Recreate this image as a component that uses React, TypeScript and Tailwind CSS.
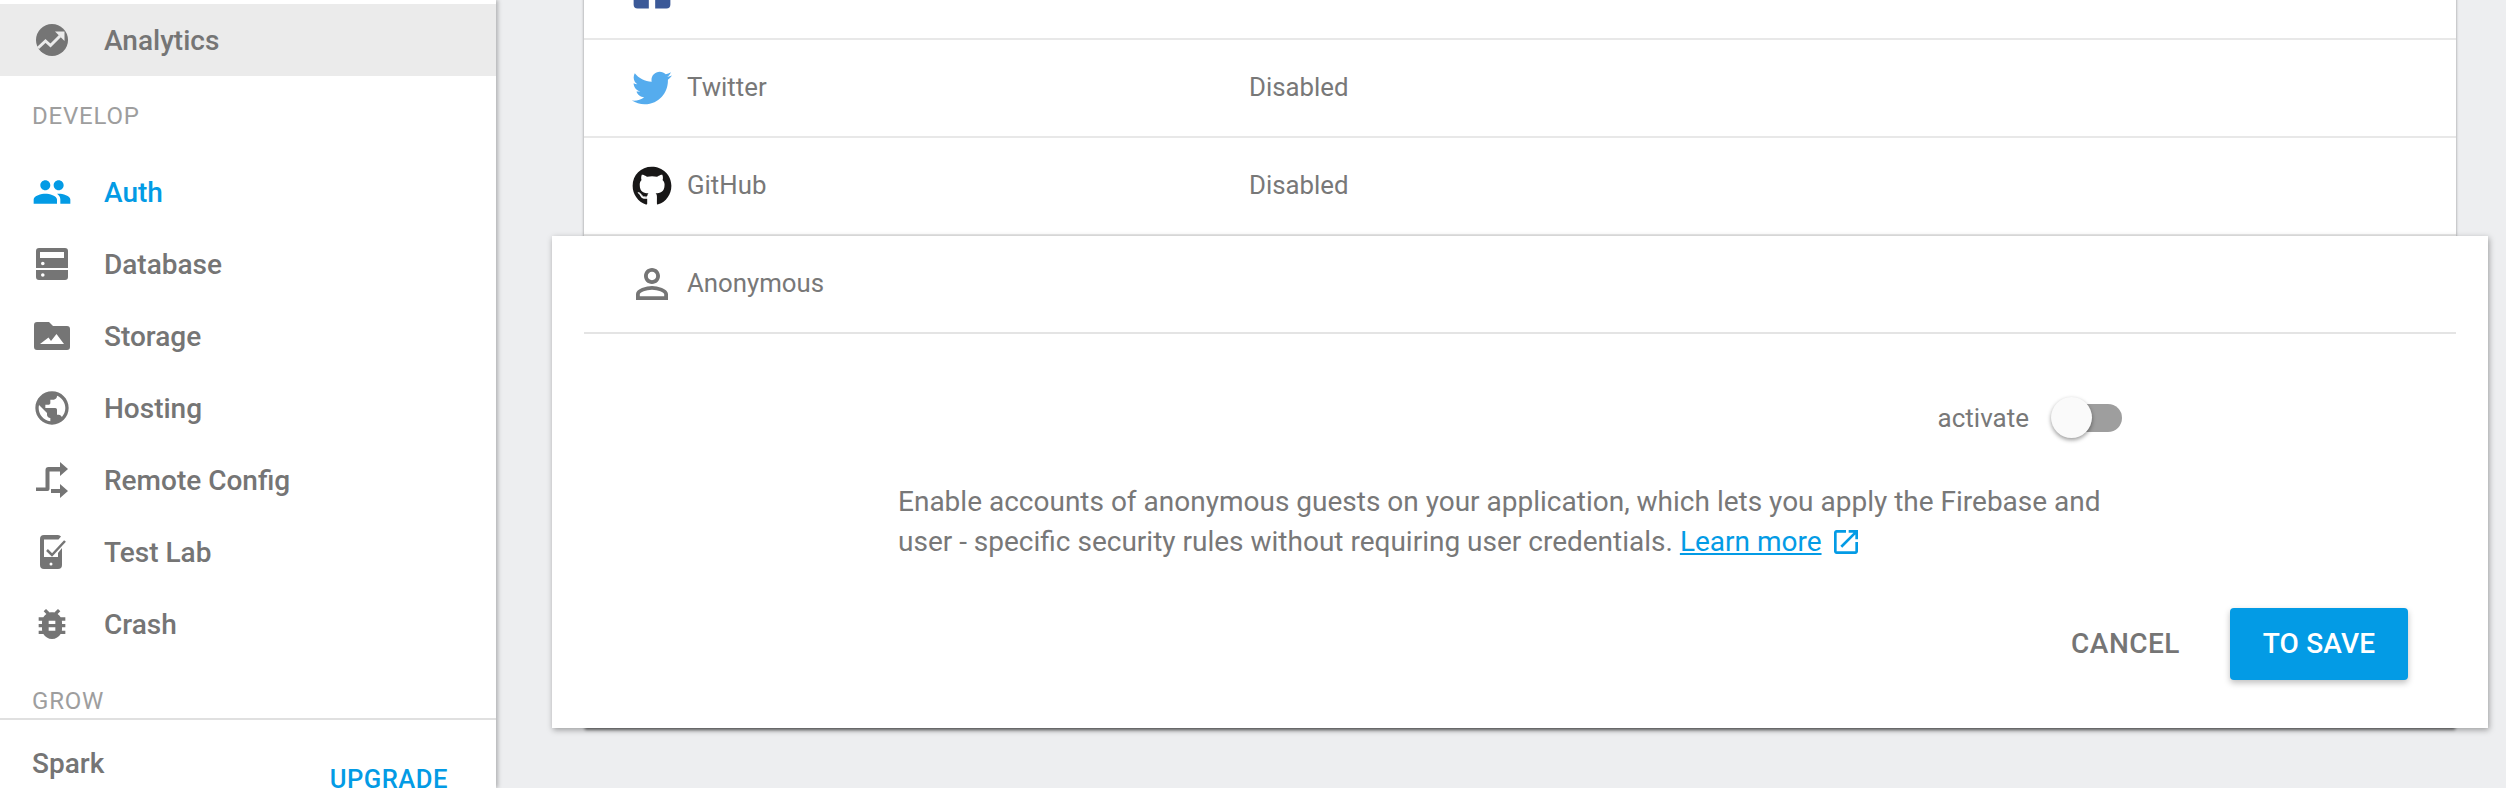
import { FaFacebookSquare, FaGithub, FaTwitter } from 'react-icons/fa';

const font = "font-['Roboto','Liberation_Sans',sans-serif]";

function AnalyticsIcon() {
  return (
    <svg viewBox="0 0 32 32" className="w-[32px] h-[32px]">
      <circle cx="16" cy="16" r="16" fill="#757575" />
      <path d="M2 24l7.500-7 5 4.500L24 12" fill="none" stroke="#ebebeb" strokeWidth="3" />
      <path d="M19 7.500h9.500V17z" fill="#ebebeb" />
    </svg>
  );
}

function AuthIcon() {
  return (
    <svg viewBox="0 0 24 24" className="w-[40px] h-[40px] fill-[#039be5]">
      <path d="M16 11c1.660 0 2.990-1.340 2.990-3S17.660 5 16 5c-1.660 0-3 1.340-3 3s1.340 3 3 3zm-8 0c1.660 0 2.990-1.340 2.990-3S9.660 5 8 5C6.340 5 5 6.340 5 8s1.340 3 3 3zm0 2c-2.330 0-7 1.170-7 3.500V19h14v-2.500c0-2.330-4.670-3.500-7-3.500zm8 0c-.29 0-.62.02-.97.05 1.160.84 1.970 1.970 1.970 3.450V19h6v-2.500c0-2.330-4.670-3.500-7-3.500z" />
    </svg>
  );
}

function DatabaseIcon() {
  return (
    <svg viewBox="0 0 32 32" className="w-[32px] h-[32px]">
      <path
        fillRule="evenodd"
        fill="#757575"
        d="M3 0h26a3 3 0 0 1 3 3v17H0V3a3 3 0 0 1 3-3zm1 4v6h24V4zm1 11.500a1.800 1.800 0 1 0 3.600 0 1.800 1.800 0 1 0-3.600 0zM0 22h32v7a3 3 0 0 1-3 3H3a3 3 0 0 1-3-3zm5 5a1.800 1.800 0 1 0 3.600 0 1.800 1.800 0 1 0-3.600 0z"
      />
    </svg>
  );
}

function StorageIcon() {
  return (
    <svg viewBox="0 0 36 28" className="w-[36px] h-[28px]">
      <path
        fillRule="evenodd"
        fill="#757575"
        d="M3 0h12l4 4h14a3 3 0 0 1 3 3v18a3 3 0 0 1-3 3H3a3 3 0 0 1-3-3V3a3 3 0 0 1 3-3zm3 22h24l-7.500-10-5.500 7-2.500-3.500z"
      />
    </svg>
  );
}

function HostingIcon() {
  return (
    <svg viewBox="0 0 24 24" className="w-[40px] h-[40px] fill-[#757575]">
      <path d="M12 2C6.480 2 2 6.480 2 12s4.480 10 10 10 10-4.480 10-10S17.520 2 12 2zm-1 17.930c-3.950-.49-7-3.850-7-7.930 0-.62.08-1.210.21-1.790L9 15v1c0 1.100.9 2 2 2v1.930zm6.900-2.540c-.26-.81-1-1.390-1.900-1.390h-1v-3c0-.55-.45-1-1-1H8v-2h2c.55 0 1-.45 1-1V7h2c1.100 0 2-.9 2-2v-.41c2.930 1.190 5 4.060 5 7.410 0 2.080-.8 3.970-2.100 5.390z" />
    </svg>
  );
}

function RemoteIcon() {
  return (
    <svg viewBox="0 0 32 36" className="w-[32px] h-[36px] fill-[#757575]">
      <path d="M24 0l8 7-8 7V9.500H13.500V27a2 2 0 0 1-2 2H0v-3.500h9.500V8a3 3 0 0 1 3-3H24z" />
      <path d="M24 22l8 7-8 7v-5H15v-4h9z" />
    </svg>
  );
}

function TestLabIcon() {
  return (
    <svg viewBox="0 0 28 34" className="w-[28px] h-[34px]">
      <path
        fillRule="evenodd"
        fill="#757575"
        d="M7 0h13a4 4 0 0 1 3 1.500L20.500 4.500H6V22h14v-4l4-5v17a4 4 0 0 1-4 4H6a4 4 0 0 1-4-4V4a4 4 0 0 1 4-4zm6 27.500a1.500 1.500 0 1 0 0 3 1.500 1.500 0 1 0 0-3z"
      />
      <path d="M9 15l5 5L27 6" fill="none" stroke="#757575" strokeWidth="2.500" />
    </svg>
  );
}

function CrashIcon() {
  return (
    <svg viewBox="0 0 24 24" className="w-[40px] h-[40px] fill-[#757575]">
      <path d="M20 8h-2.810c-.45-.78-1.070-1.450-1.820-1.960L17 4.410 15.590 3l-2.170 2.170C12.960 5.060 12.490 5 12 5c-.49 0-.96.060-1.410.17L8.410 3 7 4.410l1.620 1.630C7.880 6.550 7.260 7.220 6.810 8H4v2h2.090c-.05.33-.09.66-.09 1v1H4v2h2v1c0 .34.04.67.09 1H4v2h2.810c1.040 1.790 2.970 3 5.190 3s4.150-1.210 5.190-3H20v-2h-2.090c.05-.33.09-.66.09-1v-1h2v-2h-2v-1c0-.34-.04-.67-.09-1H20V8zm-6 8h-4v-2h4v2zm0-4h-4v-2h4v2z" />
    </svg>
  );
}

function PersonIcon() {
  return (
    <svg viewBox="0 0 24 24" className="w-[48px] h-[48px] fill-[#757575]">
      <path d="M12 5.900c1.160 0 2.100.94 2.100 2.100s-.94 2.100-2.100 2.100S9.900 9.160 9.900 8s.94-2.100 2.100-2.100m0 9c2.970 0 6.100 1.460 6.100 2.100v1.100H5.900V17c0-.64 3.130-2.100 6.100-2.100M12 4C9.790 4 8 5.790 8 8s1.790 4 4 4 4-1.790 4-4-1.790-4-4-4zm0 9c-2.670 0-8 1.340-8 4v3h16v-3c0-2.660-5.330-4-8-4z" />
    </svg>
  );
}

function OpenIcon() {
  return (
    <svg viewBox="0 0 24 24" className="inline-block align-[-7px] ml-[8px] w-[32px] h-[32px] fill-[#039be5]">
      <path d="M19 19H5V5h7V3H5c-1.110 0-2 .9-2 2v14c0 1.100.89 2 2 2h14c1.100 0 2-.9 2-2v-7h-2v7zM14 3v2h3.590l-9.830 9.830 1.410 1.410L19 6.410V10h2V3h-7z" />
    </svg>
  );
}

function NavItem({ icon, label, active }: { icon: React.ReactNode; label: string; active?: boolean }) {
  return (
    <div className={`flex items-center h-[72px] shrink-0 ${active ? 'text-[#039be5]' : 'text-[#757575]'}`}>
      <div className="w-[104px] flex justify-center shrink-0">{icon}</div>
      <span className="text-[28px] font-medium pt-[2px]">{label}</span>
    </div>
  );
}

function ProviderRow({ icon, name, status }: { icon: React.ReactNode; name: string; status?: string }) {
  return (
    <div className="flex items-center h-[98px] border-b-2 border-[#e8e8e8] pl-[44px] text-[25.800px] text-[#787878]">
      <div className="w-[48px] flex justify-center shrink-0">{icon}</div>
      <span className="ml-[11px] w-[562px] pb-[1px]">{name}</span>
      {status && <span className="pb-[1px]">{status}</span>}
    </div>
  );
}

export default function App() {
  return (
    <div className={`flex h-[788px] overflow-hidden bg-[#edeef0] ${font}`}>
      {/* Sidebar */}
      <aside className="w-[496px] shrink-0 bg-white pt-[4px] flex flex-col shadow-[2px_0_4px_rgba(0,0,0,0.25)] z-10">
        <div className="flex items-center h-[72px] shrink-0 bg-[#ebebeb] text-[#757575]">
          <div className="w-[104px] flex justify-center shrink-0">
            <AnalyticsIcon />
          </div>
          <span className="text-[28px] font-medium pt-[2px]">Analytics</span>
        </div>

        <div className="h-[80px] shrink-0 flex items-center pl-[32px] text-[24px] tracking-[0.8px] text-[#9e9e9e]">DEVELOP</div>

        <NavItem active icon={<AuthIcon />} label="Auth" />
        <NavItem icon={<DatabaseIcon />} label="Database" />
        <NavItem icon={<StorageIcon />} label="Storage" />
        <NavItem icon={<HostingIcon />} label="Hosting" />
        <NavItem icon={<RemoteIcon />} label="Remote Config" />
        <NavItem icon={<TestLabIcon />} label="Test Lab" />
        <NavItem icon={<CrashIcon />} label="Crash" />

        <div className="h-[58px] shrink-0 flex items-end pl-[32px] leading-[34px] text-[24px] tracking-[0.8px] text-[#9e9e9e]">GROW</div>

        <div className="border-t-2 border-[#e0e0e0] flex justify-between pl-[32px] pr-[48px] pt-[23px]">
          <span className="text-[#757575] text-[28px] font-medium">Spark</span>
          <span className="text-[#039be5] text-[25.600px] font-medium mt-[17px] tracking-[0.5px]">UPGRADE</span>
        </div>
      </aside>

      {/* Providers card */}
      <main className="flex-1 pl-[88px] pr-[50px]">
        <div className="-mt-[58px] bg-white h-[786px] shadow-[0_3px_3px_-1px_rgba(0,0,0,0.45),0_0_3px_rgba(0,0,0,0.2)]">
          <ProviderRow icon={<FaFacebookSquare className="w-[42px] h-[42px] text-[#3b5998]" />} name="Facebook" status="Disabled" />
          <ProviderRow icon={<FaTwitter className="w-[40px] h-[40px] text-[#55acee]" />} name="Twitter" status="Disabled" />
          <ProviderRow icon={<FaGithub className="w-[40px] h-[40px] text-[#181717]" />} name="GitHub" status="Disabled" />

          {/* Expanded provider */}
          <div className="relative -mx-[32px] bg-white shadow-[1px_2px_6px_rgba(0,0,0,0.35)] pb-[48px] text-[#787878]">
            <div className="mx-[32px] flex items-center h-[98px] border-b-2 border-[#e4e4e4] pl-[44px] text-[25.800px]">
              <div className="w-[48px] flex justify-center shrink-0">
                <PersonIcon />
              </div>
              <span className="ml-[11px] pb-[1px]">Anonymous</span>
            </div>

            <div className="mt-[70px] pr-[366px] flex justify-end items-center h-[28px]">
              <span className="text-[26px] mr-[23px]">activate</span>
              <div className="relative w-[70px] h-[28px] rounded-full bg-[#9e9e9e]">
                <div className="absolute -left-[1px] -top-[7px] w-[41px] h-[41px] rounded-full bg-[#fafafa] shadow-[0_2px_4px_rgba(0,0,0,0.4)]" />
              </div>
            </div>

            <p className="mt-[50px] ml-[346px] w-[1240px] text-[28px] leading-[40px]">
              Enable accounts of anonymous guests on your application, which lets you apply the Firebase and user - specific security rules without requiring user credentials.{' '}
              <a className="text-[#039be5] underline">Learn more</a>
              <OpenIcon />
            </p>

            <div className="mt-[46px] pr-[80px] flex justify-end items-center">
              <button className="text-[28px] font-medium tracking-[0.5px] text-[#757575] mr-[50px]">CANCEL</button>
              <button className="w-[178px] h-[72px] rounded-[4px] bg-[#039be5] text-white text-[28px] font-medium tracking-[0.2px] shadow-[0_3px_6px_rgba(0,0,0,0.25)]">
                TO SAVE
              </button>
            </div>
          </div>
        </div>
      </main>
    </div>
  );
}
